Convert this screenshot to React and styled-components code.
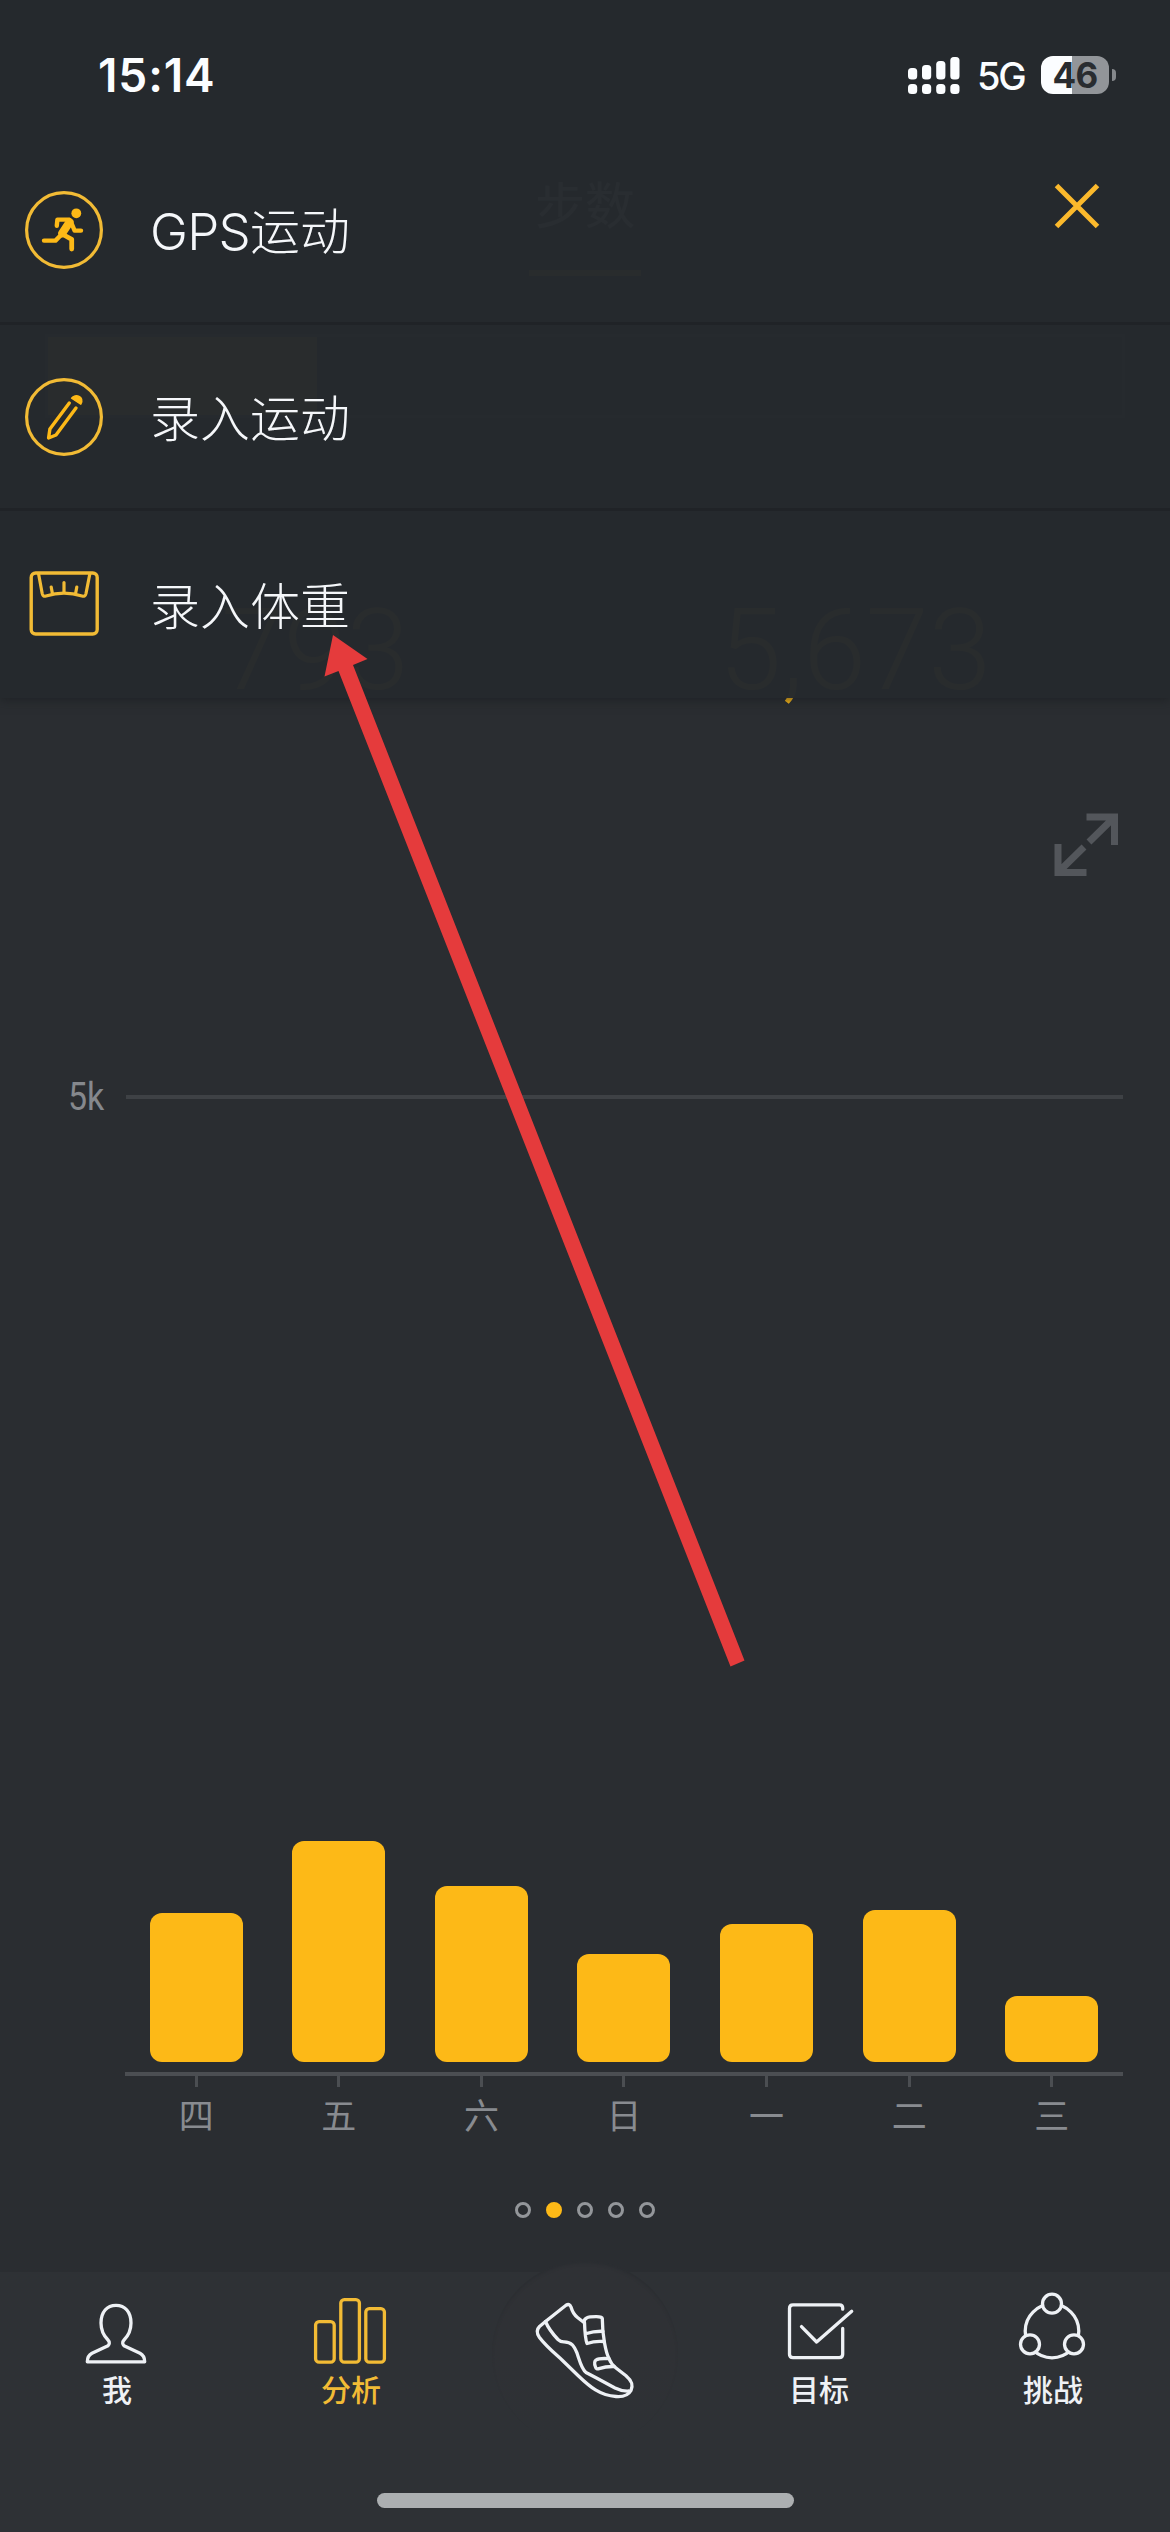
import React from "react";
import styled, { createGlobalStyle } from "styled-components";

const GOLD = "#fdb917";
const ICON_GOLD = "#f2bb35";
const LIGHT = "#eef1f5";
const NAV_BG = "#2e3135";

const Global = createGlobalStyle`
  * { box-sizing: border-box; }
  body { margin: 0; background: #2a2d31; }
`;

const Screen = styled.div`
  position: relative;
  display: flex;
  flex-direction: column;
  width: 1170px;
  height: 2532px;
  overflow: hidden;
  background: #2a2d31;
  color: ${LIGHT};
  font-family: Inter, "Noto Sans CJK SC", sans-serif;
`;

/* ---------- page below the sheet ---------- */

const Summary = styled.section`
  display: flex;
  flex-direction: column;
  height: 760px;
  flex: none;
  padding: 172px 45px 0;
`;

const PageTitle = styled.div`
  align-self: center;
  height: 104px;
  width: 112px;
  border-bottom: 6px solid ${GOLD};
  font-size: 50px;
  line-height: 68px;
  text-align: center;
`;

const Segments = styled.div`
  display: grid;
  grid-template-columns: repeat(4, 1fr);
  height: 84px;
  margin-top: 58px;
  border: 3px solid #55585c;
`;

const Segment = styled.div`
  background: ${(p) => (p.$on ? GOLD : "transparent")};
`;

const Totals = styled.div`
  display: grid;
  grid-template-columns: 1fr 1fr;
  margin-top: 191px;
`;

const Total = styled.div`
  color: ${GOLD};
  font-family: Roboto, sans-serif;
  font-weight: 300;
  font-size: 113px;
  line-height: 84px;
  text-align: center;
`;

const ChartPanel = styled.section`
  display: flex;
  flex-direction: column;
  height: 1512px;
  flex: none;
  padding: 53px 47px 0 0;
`;

const ExpandIcon = styled.svg`
  align-self: flex-end;
  width: 64px;
  height: 64px;
  margin-right: 5px;
  fill: none;
  stroke: #53565b;
  stroke-width: 7;
`;

const GridRow = styled.div`
  display: flex;
  align-items: center;
  height: 46px;
  margin-top: 197px;
`;

const GridLabel = styled.div`
  width: 126px;
  padding-left: 68px;
  color: #85888d;
  font: 400 39px/46px Roboto, sans-serif;
  span {
    display: inline-block;
    transform: scaleX(0.87);
    transform-origin: 0 50%;
  }
`;

const GridLine = styled.div`
  flex: 1;
  height: 4px;
  background: #3e4145;
`;

const Bars = styled.div`
  display: grid;
  grid-template-columns: repeat(7, 1fr);
  align-items: end;
  justify-items: center;
  height: 956px;
  margin-left: 125px;
  padding-bottom: 10px;
  border-bottom: 4px solid #4b4e52;
`;

const Bar = styled.div`
  width: 93px;
  border-radius: 12px;
  background: ${GOLD};
`;

const Days = styled.div`
  display: grid;
  grid-template-columns: repeat(7, 1fr);
  margin-left: 125px;
`;

const Day = styled.div`
  display: flex;
  flex-direction: column;
  align-items: center;
  color: #888b90;
  font: 400 35px/50px "Noto Sans CJK SC", sans-serif;
  &::before {
    content: "";
    width: 3px;
    height: 11px;
    margin-bottom: 2px;
    background: #4b4e52;
  }
`;

const Pager = styled.div`
  display: flex;
  justify-content: center;
  gap: 15.2px;
  margin: 63px -47px 0 0;
`;

const Dot = styled.i`
  width: 16px;
  height: 16px;
  border-radius: 50%;
  border: 3.5px solid ${(p) => (p.$on ? GOLD : "#93969a")};
  background: ${(p) => (p.$on ? GOLD : "transparent")};
`;

/* ---------- bottom navigation ---------- */

const Nav = styled.nav`
  display: flex;
  flex-direction: column;
  align-items: center;
  height: 260px;
  flex: none;
  background: ${NAV_BG};
`;

const Tabs = styled.div`
  display: grid;
  grid-template-columns: repeat(5, 1fr);
  width: 100%;
  height: 221px;
`;

const Tab = styled.div`
  position: relative;
  display: flex;
  flex-direction: column;
  align-items: center;
  padding-top: 18px;
  color: ${(p) => (p.$on ? ICON_GOLD : LIGHT)};
  font: 500 30px/40px "Noto Sans CJK SC", sans-serif;
`;

const TabLabel = styled.div`
  margin-top: -12px;
`;

const Hub = styled.div`
  position: absolute;
  top: -11px;
  left: 24px;
  width: 186px;
  height: 186px;
  border-radius: 50%;
  background: linear-gradient(#2f3135 50%, ${NAV_BG} 90%);
  box-shadow: inset 0 3px 3px -1px #2a2d31;
`;

const TabIcon = styled.svg`
  position: relative;
  flex: none;
  width: ${(p) => p.$size || 90}px;
  height: ${(p) => p.$size || 90}px;
  fill: none;
  stroke: currentColor;
  stroke-width: 3.3;
  stroke-linecap: round;
  stroke-linejoin: round;
`;

const HomeBar = styled.div`
  width: 417px;
  height: 15px;
  border-radius: 8px;
  background: #acafb1;
`;

/* ---------- sheet with the quick actions ---------- */

const Sheet = styled.div`
  position: absolute;
  top: 0;
  left: 0;
  width: 100%;
  height: 698px;
  display: flex;
  flex-direction: column;
  background: rgba(38, 42, 46, 0.984);
  box-shadow: 0 2px 10px rgba(24, 27, 30, 0.6);
`;

const StatusBar = styled.div`
  display: flex;
  align-items: center;
  height: 138px;
  flex: none;
  padding: 11px 54px 0 98px;
`;

const Clock = styled.div`
  flex: 1;
  color: #fbfdff;
  font-size: 46px;
  font-weight: 600;
  letter-spacing: 0.9px;
`;

const Signal = styled.svg`
  width: 52px;
  height: 38px;
  fill: #fbfdff;
`;

const Network = styled.div`
  width: 47px;
  margin: 2px 17px 0 17px;
  color: #fbfdff;
  font-size: 38px;
  font-weight: 500;
  letter-spacing: -2.2px;
`;

const Battery = styled.div`
  width: 68px;
  height: 38px;
  border-radius: 12px;
  background: linear-gradient(90deg, #fbfdff 31px, #929599 31px);
  color: #292c30;
  font-size: 35px;
  font-weight: 700;
  line-height: 38px;
  letter-spacing: -0.8px;
  text-align: center;
`;

const BatteryCap = styled.div`
  width: 4px;
  height: 12px;
  margin-left: 3px;
  border-radius: 0 6px 6px 0;
  background: #85888c;
`;

const Action = styled.div`
  display: flex;
  align-items: center;
  gap: 47px;
  height: 187px;
  padding-left: 25px;
  border-bottom: ${(p) => (p.$last ? 0 : 3)}px solid rgba(31, 34, 38, 0.75);
`;

const ActionIcon = styled.svg`
  width: 78px;
  height: 78px;
  fill: none;
  stroke: ${ICON_GOLD};
  stroke-width: 3.2;
  stroke-linecap: round;
  stroke-linejoin: round;
`;

const ActionText = styled.div`
  padding-top: 5px;
  color: #f5f7fa;
  font-size: 50px;
  font-weight: 300;
  line-height: 60px;
`;

const Latin = styled.span`
  font-size: 51px;
  letter-spacing: -0.7px;
`;

const Close = styled.svg`
  position: absolute;
  left: 1054px;
  top: 183px;
  width: 46px;
  height: 46px;
  stroke: #fbb92c;
  stroke-width: 5;
`;

const Pointer = styled.svg`
  position: absolute;
  left: 0;
  top: 0;
  width: 1170px;
  height: 2532px;
  fill: #e53b3c;
  pointer-events: none;
`;

const week = [
  { day: "四", h: 149 },
  { day: "五", h: 221 },
  { day: "六", h: 176 },
  { day: "日", h: 108 },
  { day: "一", h: 138 },
  { day: "二", h: 152 },
  { day: "三", h: 66 },
];

const Runner = () => (
  <ActionIcon viewBox="0 0 78 78">
    <circle cx="39" cy="39" r="37.4" />
    <circle cx="51.3" cy="22.3" r="4.9" fill={GOLD} stroke="none" />
    <g stroke={GOLD} strokeWidth="4.4">
      <path d="M44 28.6H32.4L31.8 34.8" />
      <path d="M46 31L49.6 39.6H56" />
      <path d="M38 42L30.5 49.6H19" />
      <path d="M38 43.5L46.7 48.3V58" strokeWidth="4.8" />
      <path d="M44.6 31L37.2 42.3" strokeWidth="8" />
    </g>
  </ActionIcon>
);

const Pencil = () => (
  <ActionIcon viewBox="0 0 78 78">
    <circle cx="39" cy="39" r="37.4" />
    <path d="M44.3 25L24.9 51L23.6 60L31 57L51 30" strokeWidth="3.4" stroke={GOLD} />
    <path d="M46.6 20.2C50 15.5 60 18 55.8 26.2Z" fill={GOLD} stroke={GOLD} strokeWidth="1.5" />
  </ActionIcon>
);

const Scale = () => (
  <ActionIcon viewBox="0 0 78 78">
    <rect x="6.2" y="7" width="66" height="61" rx="4.5" strokeWidth="3.4" />
    <path d="M13.6 8L17.2 27.5Q18 31 21 30Q39 24.4 57 30Q60.2 31 61 27.5L64.8 8" />
    <path d="M26.2 21L27.4 27.5M39 16.5V26.5M51.8 21L50.6 27.5" />
  </ActionIcon>
);

const Person = () => (
  <TabIcon viewBox="0 0 90 90">
    <path d="M44 15.3C35 15.3 29 22 29 33C29 41 32 46 36 50C38 52 37.5 54.5 36 55.8L20 63.3C16.3 65.3 15.3 68 15.3 71.8H72.7C72.7 68 71.7 65.3 68 63.3L52 55.8C50.5 54.5 50 52 52 50C56 46 59 41 59 33C59 22 53 15.3 44 15.3Z" />
  </TabIcon>
);

const Columns = () => (
  <TabIcon viewBox="0 0 90 90">
    <rect x="9.6" y="31.6" width="18.6" height="40.6" rx="3.5" />
    <rect x="34.8" y="9.6" width="18.6" height="62.6" rx="3.5" />
    <rect x="59.8" y="18.6" width="18.6" height="53.6" rx="3.5" />
  </TabIcon>
);

const Shoe = () => (
  <TabIcon viewBox="0 0 110 110" $size={110}>
    <path d="M15.5 31.5L36 15.2Q39.5 13.2 41 17Q43 24 47.5 27.5L54 32.5C54 28 57 26.7 66 26.7Q72 26.6 72.3 28.5C72.3 46 76 63 79 68.5Q81 74 86 78L96 85.8C102 91 103.5 95 101 100.5C98 106 93 107 86 106.5C70 105.5 60 97 48 85.5L31.5 69.5C22 61 15 55 9.5 47.5Q5 41 9.5 36.5Z" />
    <path d="M54.5 32.5Q55 48 57 53.5Q65 50.7 74 51.5M55.5 43.8Q64 41 73 41.3" />
    <path d="M79 68.7Q69 68 66 70Q63.5 72 65.5 77Q66.3 79.5 69 78.6Q76 76.3 84 76.5" />
    <path d="M15.5 31.5Q19 40 28 49.5Q30.5 52 34 51.9C42 52 44 56 47 63C50 72 51.5 79 56 82.5L67 88.3L85 98Q92 101.5 99 101" />
  </TabIcon>
);

const Target = () => (
  <TabIcon viewBox="0 0 90 90">
    <path d="M68.7 19.2V18Q68.7 14.8 65.5 14.8H19Q15.5 14.8 15.5 18.3V64.3Q15.5 67.7 19 67.7H65.2Q68.7 67.7 68.7 64.3V38.5" />
    <path d="M27.5 36.6L42.6 52L77.7 21.3" />
  </TabIcon>
);

const Challenge = () => (
  <TabIcon viewBox="0 0 90 90">
    <circle cx="44" cy="41" r="26.8" />
    <g fill={NAV_BG}>
      <circle cx="44" cy="13.7" r="9.5" />
      <circle cx="22" cy="54.3" r="9.5" />
      <circle cx="66" cy="54.3" r="9.5" />
    </g>
  </TabIcon>
);

export default function App() {
  return (
    <Screen>
      <Global />
      <Summary>
        <PageTitle>步数</PageTitle>
        <Segments>
          <Segment $on />
          <Segment />
          <Segment />
          <Segment />
        </Segments>
        <Totals>
          <Total>793</Total>
          <Total>5,673</Total>
        </Totals>
      </Summary>

      <ChartPanel>
        <ExpandIcon viewBox="0 0 64 64">
          <path d="M32.5 4H60.5V32M60 4.5L35 29M4 31V59.5H32.5M4.5 59L30 34" />
        </ExpandIcon>
        <GridRow>
          <GridLabel><span>5k</span></GridLabel>
          <GridLine />
        </GridRow>
        <Bars>
          {week.map((w) => (
            <Bar key={w.day} style={{ height: w.h }} />
          ))}
        </Bars>
        <Days>
          {week.map((w) => (
            <Day key={w.day}>{w.day}</Day>
          ))}
        </Days>
        <Pager>
          <Dot />
          <Dot $on />
          <Dot />
          <Dot />
          <Dot />
        </Pager>
      </ChartPanel>

      <Nav>
        <Tabs>
          <Tab><Person /><TabLabel>我</TabLabel></Tab>
          <Tab $on><Columns /><TabLabel>分析</TabLabel></Tab>
          <Tab><Hub /><Shoe /></Tab>
          <Tab><Target /><TabLabel>目标</TabLabel></Tab>
          <Tab><Challenge /><TabLabel>挑战</TabLabel></Tab>
        </Tabs>
        <HomeBar />
      </Nav>

      <Sheet>
        <StatusBar>
          <Clock>15:14</Clock>
          <Signal viewBox="0 0 52 38">
            <rect x="0" y="12" width="9.2" height="11.5" rx="3.5" />
            <rect x="14" y="9" width="9.2" height="14.5" rx="3.5" />
            <rect x="28.2" y="5" width="9.2" height="18.5" rx="3.5" />
            <rect x="42.3" y="1" width="9.2" height="22.5" rx="3.5" />
            <rect x="0" y="28" width="9.2" height="10" rx="3.5" />
            <rect x="14" y="28" width="9.2" height="10" rx="3.5" />
            <rect x="28.2" y="28" width="9.2" height="10" rx="3.5" />
            <rect x="42.3" y="28" width="9.2" height="10" rx="3.5" />
          </Signal>
          <Network>5G</Network>
          <Battery>46</Battery>
          <BatteryCap />
        </StatusBar>
        <Action>
          <Runner />
          <ActionText><Latin>GPS</Latin>运动</ActionText>
        </Action>
        <Action>
          <Pencil />
          <ActionText>录入运动</ActionText>
        </Action>
        <Action $last>
          <Scale />
          <ActionText>录入体重</ActionText>
        </Action>
        <Close viewBox="0 0 46 46">
          <path d="M2.5 2.5L43.5 43.5M43.5 2.5L2.5 43.5" />
        </Close>
      </Sheet>

      <Pointer viewBox="0 0 1170 2532">
        <path d="M333 635L367.500 659L353 665L744.500 1660.500L730.500 1666.500L338.500 671L324.500 676.500Z" />
      </Pointer>
    </Screen>
  );
}
